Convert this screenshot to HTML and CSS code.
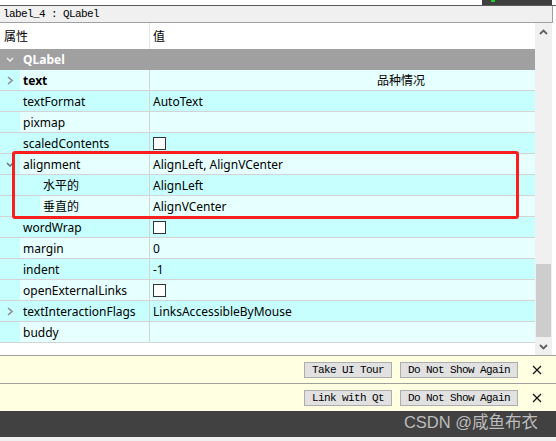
FILE: index.html
```html
<!DOCTYPE html>
<html>
<head>
<meta charset="utf-8">
<link rel="stylesheet" href="styles.css">
</head>
<body>
<div class="topstrip"><div class="topdark"><span class="green"></span></div></div>
<div class="labelbar">label_4 : QLabel</div>
<div class="tree-area">
  <div class="tree">
    <div class="header"><div class="hname">属性</div><div class="hval">值</div></div>
    <div class="group"><div class="strip"><svg width="8" height="5" viewBox="0 0 8 5"><path d="M1 1 L4 4 L7 1" class="chev-light"/></svg></div><span class="glabel">QLabel</span></div>

    <div class="row l"><div class="name"><div class="strip"><svg width="6" height="9" viewBox="0 0 6 9"><path d="M1 1 L5 4.5 L1 8" class="chev-gray"/></svg></div><span class="label bold">text</span></div><div class="value offset">品种情况</div></div>
    <div class="row d"><div class="name"><div class="strip"></div><span class="label">textFormat</span></div><div class="value">AutoText</div></div>
    <div class="row l"><div class="name"><div class="strip"></div><span class="label">pixmap</span></div><div class="value"></div></div>
    <div class="row d"><div class="name"><div class="strip"></div><span class="label">scaledContents</span></div><div class="value"><span class="check"></span></div></div>
    <div class="row l"><div class="name"><div class="strip"><svg width="8" height="5" viewBox="0 0 8 5"><path d="M1 1 L4 4 L7 1" class="chev-dark"/></svg></div><span class="label">alignment</span></div><div class="value">AlignLeft, AlignVCenter</div></div>
    <div class="row d"><div class="name"><div class="strip wide"></div><span class="label">水平的</span></div><div class="value">AlignLeft</div></div>
    <div class="row l"><div class="name"><div class="strip wide"></div><span class="label">垂直的</span></div><div class="value">AlignVCenter</div></div>
    <div class="row d"><div class="name"><div class="strip"></div><span class="label">wordWrap</span></div><div class="value"><span class="check"></span></div></div>
    <div class="row l"><div class="name"><div class="strip"></div><span class="label">margin</span></div><div class="value">0</div></div>
    <div class="row d"><div class="name"><div class="strip"></div><span class="label">indent</span></div><div class="value">-1</div></div>
    <div class="row l"><div class="name"><div class="strip"></div><span class="label">openExternalLinks</span></div><div class="value"><span class="check"></span></div></div>
    <div class="row d"><div class="name"><div class="strip"><svg width="6" height="9" viewBox="0 0 6 9"><path d="M1 1 L5 4.5 L1 8" class="chev-gray"/></svg></div><span class="label">textInteractionFlags</span></div><div class="value">LinksAccessibleByMouse</div></div>
    <div class="row l"><div class="name"><div class="strip"></div><span class="label">buddy</span></div><div class="value"></div></div>

    <div class="highlight"></div>
  </div>
  <div class="scrollbar">
    <div class="sbtn"><svg width="9" height="6" viewBox="0 0 9 6"><path d="M1 5 L4.5 1.5 L8 5" class="sarrow"/></svg></div>
    <div class="track"><div class="thumb"></div></div>
    <div class="sbtn"><svg width="9" height="6" viewBox="0 0 9 6"><path d="M1 1 L4.5 4.5 L8 1" class="sarrow"/></svg></div>
  </div>
  <div class="rightgap"></div>
</div>
<div class="info">
  <span class="btn">Take UI Tour</span>
  <span class="btn">Do Not Show Again</span>
  <svg class="close" width="10" height="10" viewBox="0 0 10 10"><path d="M1 1 L9 9 M9 1 L1 9"/></svg>
</div>
<div class="info">
  <span class="btn">Link with Qt</span>
  <span class="btn">Do Not Show Again</span>
  <svg class="close" width="10" height="10" viewBox="0 0 10 10"><path d="M1 1 L9 9 M9 1 L1 9"/></svg>
</div>
<div class="darkbar">CSDN @咸鱼布衣</div>
<div class="bottomstrip"></div>
</body>
</html>
```

FILE: styles.css
```css
html, body {
  margin: 0;
  padding: 0;
}
body {
  width: 556px;
  height: 441px;
  overflow: hidden;
  background: #fff;
  font-family: "Noto Sans", "Noto Sans CJK SC", sans-serif;
  font-size: 12px;
  color: #000;
}
.topstrip {
  height: 5px;
  border-bottom: 1px solid #5a5a5a;
  display: flex;
  justify-content: flex-end;
}
.topdark {
  width: 70px;
  margin-right: 4px;
  background: #3f3f3f;
  display: flex;
  padding-left: 9px;
  box-sizing: border-box;
}
.green {
  width: 4px;
  height: 2px;
  background: #1fcf1f;
}
.labelbar {
  height: 16px;
  width: 549px;
  background: #f0f0f0;
  border-bottom: 1px solid #a0a0a0;
  border-right: 1px solid #a0a0a0;
  padding-left: 3px;
  font-family: "Liberation Mono", monospace;
  font-size: 11px;
  letter-spacing: -0.6px;
  line-height: 16px;
}
.tree-area {
  display: flex;
  height: 332px;
}
.tree {
  width: 535px;
  position: relative;
  background: #fff;
}
.header {
  display: flex;
  height: 26px;
  line-height: 26px;
  font-family: "Noto Sans CJK SC", sans-serif;
}
.hname {
  width: 145px;
  padding-left: 4px;
  border-right: 1px solid #e5e5e5;
}
.hval {
  padding-left: 3px;
}
.group {
  display: flex;
  align-items: center;
  height: 20px;
  border-bottom: 1px solid #a0a0a0;
  background: #a0a0a0;
  color: #fff;
  font-weight: bold;
}
.glabel {
  padding-left: 3px;
}
.strip {
  width: 20px;
  height: 100%;
  flex: none;
  display: flex;
  align-items: center;
  justify-content: center;
  background: #c7ffff;
}
.group .strip {
  background: transparent;
}
.strip.wide {
  width: 40px;
}
.chev-light {
  fill: none;
  stroke: #ececec;
  stroke-width: 1.6;
}
.chev-gray {
  fill: none;
  stroke: #8e8e8e;
  stroke-width: 1.6;
}
.chev-dark {
  fill: none;
  stroke: #6a6a6a;
  stroke-width: 1.4;
}
.row {
  display: flex;
  height: 20px;
  border-bottom: 1px solid #d4d4d4;
}
.row.l {
  background: #e6ffff;
}
.row.d {
  background: #c7ffff;
}
.name {
  width: 149px;
  flex: none;
  display: flex;
  align-items: center;
  border-right: 1px solid #d4d4d4;
}
.label {
  padding-left: 3px;
  white-space: nowrap;
}
.bold {
  font-weight: bold;
}
.value {
  flex: 1;
  display: flex;
  align-items: center;
  padding-left: 3px;
  white-space: nowrap;
}
.value.offset {
  padding-left: 227px;
}
.check {
  width: 13px;
  height: 13px;
  box-sizing: border-box;
  border: 1px solid #333;
  background: #fff;
}
.highlight {
  position: absolute;
  left: 12px;
  top: 128px;
  width: 507px;
  height: 68px;
  box-sizing: border-box;
  border: 3px solid #fa1e1e;
  border-radius: 3px;
}
.scrollbar {
  width: 17px;
  background: #f0f0f0;
  display: flex;
  flex-direction: column;
}
.sbtn {
  height: 17px;
  flex: none;
  display: flex;
  align-items: center;
  justify-content: center;
}
.sarrow {
  fill: none;
  stroke: #606060;
  stroke-width: 1.8;
}
.track {
  flex: 1;
}
.thumb {
  margin-top: 224px;
  margin-left: 1px;
  width: 15px;
  height: 73px;
  background: #cdcdcd;
}
.rightgap {
  width: 4px;
  background: #fff;
}
.info {
  height: 27px;
  border-top: 1px solid #a0a0a0;
  background: #ffffe1;
  display: flex;
  align-items: center;
  justify-content: flex-end;
  gap: 8px;
  padding-right: 14px;
}
.btn {
  height: 16px;
  box-sizing: border-box;
  border: 1px solid #adadad;
  background: #e1e1e1;
  padding: 0 7px;
  font-family: "Liberation Mono", monospace;
  font-size: 11px;
  letter-spacing: -0.6px;
  line-height: 14px;
  white-space: pre;
}
.close {
  margin-left: 6px;
}
.close path {
  stroke: #111;
  stroke-width: 1.2;
  fill: none;
}
.darkbar {
  height: 26px;
  background: #414141;
  color: #bdbdbd;
  font-family: "Liberation Sans", "Noto Sans CJK SC", sans-serif;
  font-size: 16.5px;
  line-height: 22px;
  text-align: right;
  padding-right: 18px;
}
.bottomstrip {
  height: 4px;
  background: #f0f0f0;
}
```
